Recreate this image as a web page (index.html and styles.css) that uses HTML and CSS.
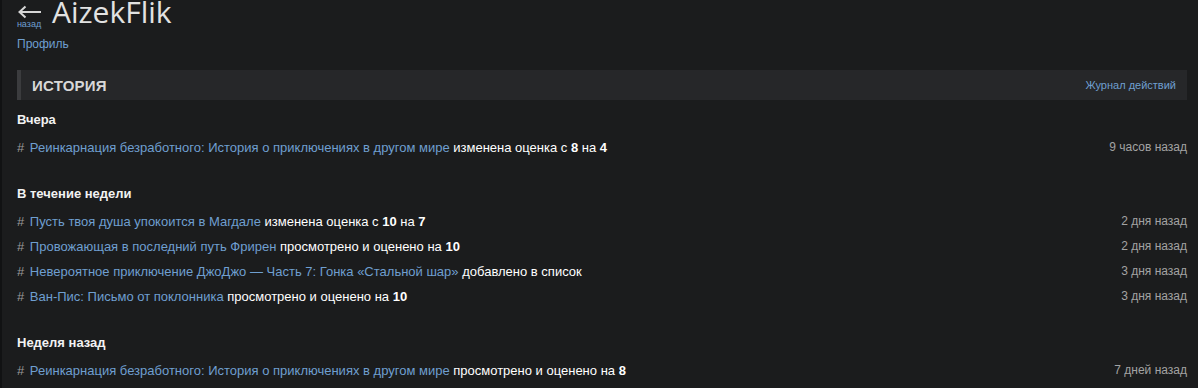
FILE: index.html
```html
<!DOCTYPE html>
<html lang="ru">
<head>
<meta charset="utf-8">
<link rel="stylesheet" href="styles.css">
</head>
<body>
<div class="page">
  <div class="topline">
    <a class="back" href="#">
      <svg class="back-arrow" width="24" height="14" viewBox="0 0 24 14" aria-hidden="true">
        <path d="M1.5 7 H23 M7.5 1.5 L1.5 7 L7.5 12.5" fill="none" stroke="#d6d6d6" stroke-width="2"/>
      </svg>
      <span class="back-text">назад</span>
    </a>
    <h1 class="title">AizekFlik</h1>
  </div>
  <a class="crumb" href="#">Профиль</a>

  <div class="bar">
    <span class="bar-title">История</span>
    <a class="bar-link" href="#">Журнал действий</a>
  </div>

  <section class="group">
    <div class="group-title">Вчера</div>
    <div class="row">
      <span class="entry"><span class="hash">#</span> <a class="link" href="#">Реинкарнация безработного: История о приключениях в другом мире</a> <span class="act">изменена оценка с <b>8</b> на <b>4</b></span></span>
      <span class="time">9 часов назад</span>
    </div>
  </section>

  <section class="group">
    <div class="group-title">В течение недели</div>
    <div class="row">
      <span class="entry"><span class="hash">#</span> <a class="link" href="#">Пусть твоя душа упокоится в Магдале</a> <span class="act">изменена оценка с <b>10</b> на <b>7</b></span></span>
      <span class="time">2 дня назад</span>
    </div>
    <div class="row">
      <span class="entry"><span class="hash">#</span> <a class="link" href="#">Провожающая в последний путь Фрирен</a> <span class="act">просмотрено и оценено на <b>10</b></span></span>
      <span class="time">2 дня назад</span>
    </div>
    <div class="row">
      <span class="entry"><span class="hash">#</span> <a class="link" href="#">Невероятное приключение ДжоДжо — Часть 7: Гонка «Стальной шар»</a> <span class="act">добавлено в список</span></span>
      <span class="time">3 дня назад</span>
    </div>
    <div class="row">
      <span class="entry"><span class="hash">#</span> <a class="link" href="#">Ван-Пис: Письмо от поклонника</a> <span class="act">просмотрено и оценено на <b>10</b></span></span>
      <span class="time">3 дня назад</span>
    </div>
  </section>

  <section class="group">
    <div class="group-title">Неделя назад</div>
    <div class="row">
      <span class="entry"><span class="hash">#</span> <a class="link" href="#">Реинкарнация безработного: История о приключениях в другом мире</a> <span class="act">просмотрено и оценено на <b>8</b></span></span>
      <span class="time">7 дней назад</span>
    </div>
  </section>
</div>
</body>
</html>
```

FILE: styles.css
```css
html, body {
  margin: 0;
  padding: 0;
  background: #1b1c1d;
}

body {
  font-family: "Liberation Sans", Arial, sans-serif;
  font-size: 13px;
  color: #e6e6e6;
  border-left: 2px solid #111213;
  height: 388px;
  overflow: hidden;
  box-sizing: border-box;
}

a {
  text-decoration: none;
}

.page {
  padding: 0 11px 0 15px;
}

.topline {
  display: flex;
  align-items: flex-start;
  height: 34px;
}

.back {
  display: flex;
  flex-direction: column;
  align-items: center;
  width: 24px;
  margin-top: 5px;
  margin-right: 11px;
}

.back-arrow {
  display: block;
  margin-left: 1px;
}

.back-text {
  color: #6f9fd0;
  font-size: 9px;
  line-height: 10px;
  margin-top: 0;
}

.title {
  margin: 0;
  margin-top: -6px;
  font-family: "Open Sans", "Liberation Sans", sans-serif;
  font-weight: 400;
  font-size: 30px;
  line-height: 36px;
  color: #e2e2e2;
}

.crumb {
  display: block;
  color: #6f9fd0;
  font-size: 12px;
  line-height: 16px;
  height: 16px;
  margin-top: 2px;
}

.bar {
  margin-top: 18px;
  height: 30px;
  background: #262729;
  border-left: 4px solid #3b3c3e;
  display: flex;
  align-items: center;
  justify-content: space-between;
  padding: 0 11px 0 11px;
}

.bar-title {
  text-transform: uppercase;
  font-weight: 700;
  font-size: 15px;
  color: #d8d8d8;
  letter-spacing: 0.2px;
}

.bar-link {
  color: #6f9fd0;
  font-size: 11px;
}

.group {
  margin-top: 12px;
}

.group + .group {
  margin-top: 26px;
}

.group-title {
  font-weight: 700;
  font-size: 13px;
  line-height: 16px;
  color: #f2f2f2;
  margin-bottom: 7px;
}

.row {
  display: flex;
  justify-content: space-between;
  align-items: center;
  height: 25px;
  line-height: 25px;
}

.hash {
  color: #9a9a9a;
  margin-right: 2px;
}

.link {
  color: #6f9fd0;
}

.act {
  color: #ffffff;
}

.act b {
  font-weight: 700;
}

.time {
  color: #a3a3a3;
  font-size: 12px;
}
```
